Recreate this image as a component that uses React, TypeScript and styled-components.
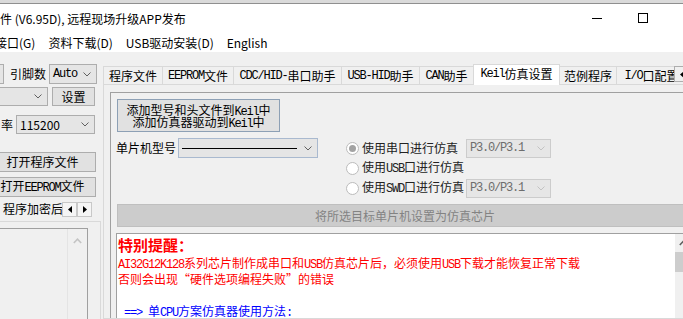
import React from 'react';
import styled, { createGlobalStyle } from 'styled-components';

const FONT = `"Noto Sans CJK SC", "Microsoft YaHei", sans-serif`;
const MONO = `"Liberation Mono", "Noto Sans CJK SC", monospace`;

const GlobalStyle = createGlobalStyle`
  html, body { margin: 0; padding: 0; background: #f0f0f0; overflow: hidden; }
  body { font-family: ${FONT}; font-size: 12px; color: #000; }
  * { box-sizing: border-box; }
`;

/* SimSun-like half-width run: 6px per character */
const Asc = styled.span`
  font-family: "Liberation Mono", monospace;
  font-size: 12px;
  letter-spacing: -1.2px;
`;

const Window = styled.div`
  width: 712px;
  height: 319px;
  display: flex;
  flex-direction: column;
  background: #f0f0f0;
  overflow: hidden;
`;

const WindowEdge = styled.div`
  height: 4px;
  background: #dadada;
  border-bottom: 1px solid #8f8f8f;
`;

const TitleBar = styled.div`
  height: 28px;
  background: #fff;
  display: flex;
  align-items: center;
`;

const TitleText = styled.div`
  flex: 1;
  font-size: 12px;
  line-height: 16px;
  white-space: nowrap;
  margin-top: 1px;
`;

const CaptionButton = styled.div`
  width: 46px;
  height: 28px;
  display: flex;
  align-items: center;
  justify-content: center;
`;

const MenuBar = styled.div`
  height: 20px;
  background: #fff;
  display: flex;
  align-items: center;
  overflow: hidden;
`;

const MenuList = styled.div`
  display: flex;
  margin-left: -11px;
`;

const MenuItem = styled.div`
  padding: 0 7px 0 6px;
  font-size: 12px;
  line-height: 18px;
  white-space: nowrap;
  margin-top: 2px;
`;

const Body = styled.div`
  flex: 1;
  display: flex;
  min-height: 0;
`;

/* ---------- left panel ---------- */
const LeftPanel = styled.div`
  width: 101px;
  display: flex;
  flex-direction: column;
  overflow: hidden;
  padding-top: 12px;
`;

const Row = styled.div<{ $mt?: number; $h?: number }>`
  display: flex;
  align-items: center;
  height: ${(p) => p.$h ?? 20}px;
  margin-top: ${(p) => p.$mt ?? 0}px;
  flex-shrink: 0;
`;

const Label = styled.span<{ $ml?: number; $w?: number }>`
  margin-left: ${(p) => p.$ml ?? 0}px;
  width: ${(p) => (p.$w ? `${p.$w}px` : 'auto')};
  font-size: 12px;
  line-height: 16px;
  white-space: nowrap;
  flex-shrink: 0;
`;

const Combo = styled.div<{ $w: number; $ml?: number; $h?: number; $border?: string; $bg?: string; $color?: string }>`
  width: ${(p) => p.$w}px;
  height: ${(p) => p.$h ?? 19}px;
  margin-left: ${(p) => p.$ml ?? 0}px;
  border: 1px solid ${(p) => p.$border ?? '#adadad'};
  background: ${(p) => p.$bg ?? '#e5e5e5'};
  color: ${(p) => p.$color ?? '#000'};
  display: flex;
  align-items: center;
  justify-content: space-between;
  padding: 0 5px 0 3px;
  flex-shrink: 0;
  white-space: nowrap;
  font-size: 12px;
`;

const ComboText = styled.span<{ $mono?: boolean }>`
  font-family: ${(p) => (p.$mono ? MONO : FONT)};
  font-size: 12px;
  letter-spacing: ${(p) => (p.$mono ? '-1.2px' : '0')};
  line-height: 14px;
`;

const ComboLine = styled.span`
  width: 115px;
  height: 1px;
  background: #000;
`;

const Button = styled.div<{ $w: number; $h?: number; $ml?: number; $border?: string }>`
  width: ${(p) => p.$w}px;
  height: ${(p) => p.$h ?? 20}px;
  margin-left: ${(p) => p.$ml ?? 0}px;
  border: 1px solid ${(p) => p.$border ?? '#adadad'};
  background: #e1e1e1;
  display: flex;
  flex-direction: column;
  align-items: center;
  justify-content: center;
  font-size: 12px;
  line-height: 12px;
  white-space: nowrap;
  flex-shrink: 0;
`;

const ButtonLine = styled.span`
  display: block;
  height: 12px;
  line-height: 12px;
`;

const SubTabStrip = styled.div`
  height: 21px;
  margin-top: 3px;
  display: flex;
  width: 92px;
  flex-shrink: 0;
`;

const SubTab = styled.div`
  flex: 1;
  min-width: 0;
  overflow: hidden;
  padding-left: 3px;
  line-height: 18px;
  font-size: 12px;
  white-space: nowrap;
`;

const ArrowBox = styled.div`
  width: 15px;
  height: 15px;
  margin-top: 2px;
  border: 1px solid #c8c8c8;
  background: #f5f5f5;
  display: flex;
  align-items: center;
  justify-content: center;
  flex-shrink: 0;
`;

const SubPage = styled.div`
  flex: 1;
  width: 101px;
  border-top: 1px solid #d9d9d9;
  border-right: 1px solid #d9d9d9;
  padding-top: 6px;
`;

const SubListBox = styled.div`
  width: 88px;
  height: 100%;
  border-top: 1px solid #a0a0a0;
  border-right: 1px solid #a0a0a0;
  display: flex;
  justify-content: flex-end;
`;

const SubScroll = styled.div`
  width: 20px;
  border-left: 1px solid #e4e4e4;
  display: flex;
  justify-content: center;
  padding-top: 9px;
`;

/* ---------- main tabs ---------- */
const MainTabs = styled.div`
  width: 603px;
  margin-left: 2px;
  display: flex;
  flex-direction: column;
  flex-shrink: 0;
`;

const TabStrip = styled.div`
  display: flex;
  height: 20px;
  margin-top: 12px;
  align-items: flex-end;
`;

const TabList = styled.div`
  flex: 1;
  min-width: 0;
  display: flex;
  align-items: flex-end;
  overflow: hidden;
  height: 21px;
  margin-bottom: -1px;
`;

const Tab = styled.div<{ $w: number; $active?: boolean; $first?: boolean }>`
  width: ${(p) => p.$w}px;
  flex-shrink: 0;
  height: ${(p) => (p.$active ? 21 : 19)}px;
  background: ${(p) => (p.$active ? '#fff' : '#f0f0f0')};
  border: 1px solid #d9d9d9;
  border-left: ${(p) => (p.$first || p.$active ? '1px solid #d9d9d9' : 'none')};
  border-bottom: ${(p) => (p.$active ? 'none' : '1px solid #d9d9d9')};
  margin-left: ${(p) => (p.$active ? -1 : 0)}px;
  display: flex;
  align-items: center;
  justify-content: center;
  font-size: 12px;
  line-height: 16px;
  white-space: nowrap;
  padding-bottom: ${(p) => (p.$active ? 2 : 0)}px;
  z-index: ${(p) => (p.$active ? 1 : 0)};
`;

const TabArrows = styled.div`
  display: flex;
  height: 20px;
  align-items: flex-start;
  padding-top: 3px;
  margin-bottom: 1px;
`;

const TabArrowBox = styled.div`
  width: 16px;
  height: 16px;
  border: 1px solid #adadad;
  background: #f0f0f0;
  display: flex;
  align-items: center;
  justify-content: center;
`;

const TabPage = styled.div`
  flex: 1;
  min-height: 0;
  border: 1px solid #d9d9d9;
  background: #f0f0f0;
  padding: 7px 6px 0 6px;
  display: flex;
`;

const InnerPanel = styled.div`
  flex: 1;
  border-top: 1px solid #a0a0a0;
  border-left: 1px solid #a0a0a0;
  padding: 6px 6px 0 6px;
  display: flex;
  flex-direction: column;
  min-width: 0;
`;

const TopRow = styled.div`
  display: flex;
  flex-shrink: 0;
`;

const LeftCol = styled.div`
  width: 229px;
  display: flex;
  flex-direction: column;
  flex-shrink: 0;
`;

const RadioCol = styled.div`
  margin-top: 39px;
  display: flex;
  flex-direction: column;
`;

const RadioRow = styled.div`
  height: 20px;
  display: flex;
  align-items: center;
`;

const RadioDot = styled.span<{ $checked?: boolean }>`
  width: 13px;
  height: 13px;
  border-radius: 50%;
  border: 1px solid #bcbcbc;
  background: #fff;
  display: flex;
  align-items: center;
  justify-content: center;
  flex-shrink: 0;
  &::after {
    content: '';
    display: ${(p) => (p.$checked ? 'block' : 'none')};
    width: 7px;
    height: 7px;
    border-radius: 50%;
    background: #a3a3a3;
  }
`;

const RadioLabel = styled.span`
  width: 104px;
  margin-left: 3px;
  font-size: 12px;
  line-height: 16px;
  color: #222;
  white-space: nowrap;
`;

const BigButton = styled.div`
  margin-top: 6px;
  height: 23px;
  border: 1px solid #bfbfbf;
  background: #cccccc;
  color: #838383;
  display: flex;
  align-items: center;
  justify-content: center;
  font-size: 12px;
  line-height: 16px;
  flex-shrink: 0;
`;

const RichText = styled.div`
  margin-top: 6px;
  margin-left: -1px;
  margin-right: 1px;
  flex: 1;
  border-top: 1px solid #a0a0a0;
  border-left: 1px solid #a0a0a0;
  background: #fff;
  display: flex;
  min-height: 0;
`;

const RichContent = styled.div`
  flex: 1;
  padding-left: 1px;
  white-space: nowrap;
  overflow: hidden;
`;

const Headline = styled.div`
  font-size: 15px;
  font-weight: bold;
  line-height: 21px;
  color: #ff0000;
`;

const TextLine = styled.div<{ $color: string; $indent?: number }>`
  font-size: 12px;
  line-height: 16px;
  height: 16px;
  color: ${(p) => p.$color};
  padding-left: ${(p) => p.$indent ?? 0}px;
`;

const VScroll = styled.div`
  width: 17px;
  background: #f0f0f0;
  display: flex;
  flex-direction: column;
  flex-shrink: 0;
`;

const ScrollArrow = styled.div`
  height: 17px;
  display: flex;
  align-items: center;
  justify-content: center;
`;

const ScrollThumb = styled.div`
  height: 20px;
  margin: 1px 1px 0 0;
  background: #cdcdcd;
`;

const Chevron = ({ color = '#606060' }: { color?: string }) => (
  <svg width="8" height="5" viewBox="0 0 8 5">
    <polyline points="0.5,0.5 4,4 7.5,0.5" fill="none" stroke={color} strokeWidth="1" />
  </svg>
);

const ChevronUp = ({ color = '#606060' }: { color?: string }) => (
  <svg width="9" height="6" viewBox="0 0 9 6">
    <polyline points="0.8,5 4.5,1.2 8.2,5" fill="none" stroke={color} strokeWidth="1.6" />
  </svg>
);

const Tri = ({ dir }: { dir: 'left' | 'right' }) => (
  <svg width="4" height="7" viewBox="0 0 4 7">
    {dir === 'left' ? <polygon points="4,0 0,3.5 4,7" fill="#000" /> : <polygon points="0,0 4,3.5 0,7" fill="#000" />}
  </svg>
);

const tabs: { key: string; label: React.ReactNode; w: number; active?: boolean }[] = [
  { key: 'prog', label: '程序文件', w: 60 },
  { key: 'eep', label: <><Asc>EEPROM</Asc>文件</>, w: 71 },
  { key: 'cdc', label: <><Asc>CDC/HID-</Asc>串口助手</>, w: 108 },
  { key: 'usb', label: <><Asc>USB-HID</Asc>助手</>, w: 78 },
  { key: 'can', label: <><Asc>CAN</Asc>助手</>, w: 54 },
  { key: 'keil', label: <><Asc>Keil</Asc>仿真设置</>, w: 87, active: true },
  { key: 'demo', label: '范例程序', w: 57 },
  { key: 'io', label: <><Asc>I/O</Asc>口配置</>, w: 70 },
];

export default function App() {
  return (
    <>
      <GlobalStyle />
      <Window>
        <WindowEdge />
        <TitleBar>
          <TitleText>件 (V6.95D), 远程现场升级APP发布</TitleText>
          <CaptionButton>
            <svg width="10" height="1" viewBox="0 0 10 1">
              <rect x="0" y="0" width="10" height="1" fill="#000" />
            </svg>
          </CaptionButton>
          <CaptionButton>
            <svg width="10" height="10" viewBox="0 0 10 10">
              <rect x="0.5" y="0.5" width="9" height="9" fill="none" stroke="#000" strokeWidth="1" />
            </svg>
          </CaptionButton>
          <CaptionButton />
        </TitleBar>
        <MenuBar>
          <MenuList>
            <MenuItem>接口(G)</MenuItem>
            <MenuItem>资料下载(D)</MenuItem>
            <MenuItem>USB驱动安装(D)</MenuItem>
            <MenuItem>English</MenuItem>
          </MenuList>
        </MenuBar>
        <Body>
          <LeftPanel>
            <Row $h={20}>
              <Combo $w={30} $ml={-26} $h={20}>
                <span />
                <Chevron />
              </Combo>
              <Label $ml={6}>引脚数</Label>
              <Combo $w={48} $ml={3} $h={20}>
                <ComboText $mono>Auto</ComboText>
                <Chevron />
              </Combo>
            </Row>
            <Row $mt={3} $h={19}>
              <Combo $w={60} $ml={-12}>
                <span />
                <Chevron />
              </Combo>
              <Button $w={43} $h={19} $ml={4}>设置</Button>
            </Row>
            <Row $mt={9} $h={19}>
              <Label $ml={1} $w={15}>率</Label>
              <Combo $w={79}>
                <ComboText>115200</ComboText>
                <Chevron />
              </Combo>
            </Row>
            <Row $mt={18} $h={20}>
              <Button $w={107} $ml={-11}>打开程序文件</Button>
            </Row>
            <Row $mt={5} $h={20}>
              <Button $w={107} $ml={-11}>
                <span>
                  打开<Asc>EEPROM</Asc>文件
                </span>
              </Button>
            </Row>
            <SubTabStrip>
              <SubTab>程序加密后</SubTab>
              <ArrowBox>
                <Tri dir="left" />
              </ArrowBox>
              <ArrowBox>
                <Tri dir="right" />
              </ArrowBox>
            </SubTabStrip>
            <SubPage>
              <SubListBox>
                <SubScroll>
                  <ChevronUp color="#c4c4c4" />
                </SubScroll>
              </SubListBox>
            </SubPage>
          </LeftPanel>

          <MainTabs>
            <TabStrip>
              <TabList>
                {tabs.map((t, i) => (
                  <Tab key={t.key} $w={t.w} $active={t.active} $first={i === 0}>
                    {t.label}
                  </Tab>
                ))}
              </TabList>
              <TabArrows>
                <TabArrowBox>
                  <Tri dir="left" />
                </TabArrowBox>
                <TabArrowBox>
                  <Tri dir="right" />
                </TabArrowBox>
              </TabArrows>
            </TabStrip>
            <TabPage>
              <InnerPanel>
                <TopRow>
                  <LeftCol>
                    <Button $w={163} $h={33} $border="#8da0b5">
                      <ButtonLine>
                        添加型号和头文件到<Asc>Keil</Asc>中
                      </ButtonLine>
                      <ButtonLine>
                        添加仿真器驱动到<Asc>Keil</Asc>中
                      </ButtonLine>
                    </Button>
                    <Row $mt={6} $h={20}>
                      <Label $ml={-1} $w={62}>单片机型号</Label>
                      <Combo $w={140} $h={20} $border="#a9b9cf">
                        <ComboLine />
                        <Chevron />
                      </Combo>
                    </Row>
                  </LeftCol>
                  <RadioCol>
                    <RadioRow>
                      <RadioDot $checked />
                      <RadioLabel>使用串口进行仿真</RadioLabel>
                      <Combo $w={85} $border="#cccccc" $bg="#e6e6e6" $color="#6d6d6d">
                        <ComboText $mono>P3.0/P3.1</ComboText>
                        <Chevron color="#c2c2c2" />
                      </Combo>
                    </RadioRow>
                    <RadioRow>
                      <RadioDot />
                      <RadioLabel>
                        使用<Asc>USB</Asc>口进行仿真
                      </RadioLabel>
                    </RadioRow>
                    <RadioRow>
                      <RadioDot />
                      <RadioLabel>
                        使用<Asc>SWD</Asc>口进行仿真
                      </RadioLabel>
                      <Combo $w={85} $border="#cccccc" $bg="#e6e6e6" $color="#6d6d6d">
                        <ComboText $mono>P3.0/P3.1</ComboText>
                        <Chevron color="#c2c2c2" />
                      </Combo>
                    </RadioRow>
                  </RadioCol>
                </TopRow>
                <BigButton>将所选目标单片机设置为仿真芯片</BigButton>
                <RichText>
                  <RichContent>
                    <Headline>特别提醒：</Headline>
                    <TextLine $color="#ff0000">
                      <Asc>AI32G12K128</Asc>系列芯片制作成串口和<Asc>USB</Asc>仿真芯片后，必须使用<Asc>USB</Asc>下载才能恢复正常下载
                    </TextLine>
                    <TextLine $color="#ff0000">否则会出现“硬件选项编程失败”的错误</TextLine>
                    <TextLine $color="#ff0000" />
                    <TextLine $color="#0000ff" $indent={6}>
                      <Asc>==&gt; </Asc>单<Asc>CPU</Asc>方案仿真器使用方法<Asc>:</Asc>
                    </TextLine>
                  </RichContent>
                  <VScroll>
                    <ScrollArrow>
                      <ChevronUp />
                    </ScrollArrow>
                    <ScrollThumb />
                  </VScroll>
                </RichText>
              </InnerPanel>
            </TabPage>
          </MainTabs>
        </Body>
      </Window>
    </>
  );
}
